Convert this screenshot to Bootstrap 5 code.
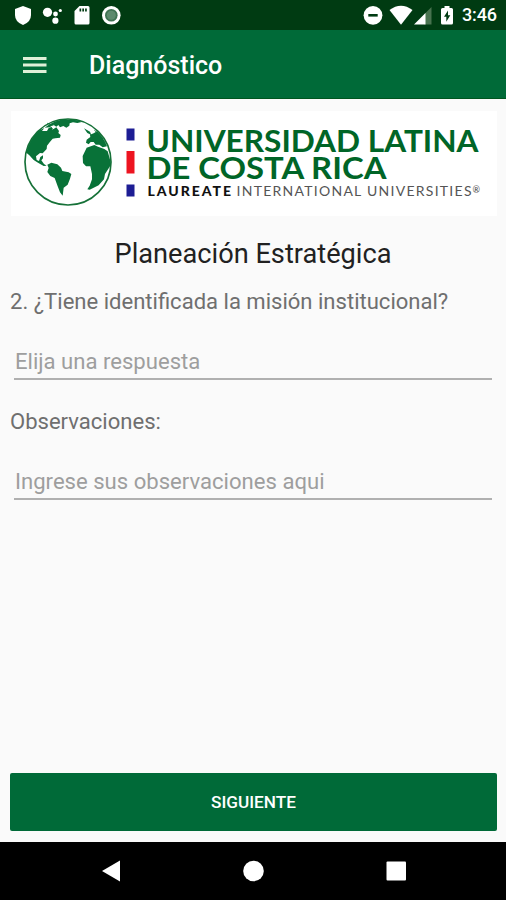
<!DOCTYPE html>
<html lang="es">
<head>
<meta charset="utf-8">
<meta name="viewport" content="width=device-width, initial-scale=1">
<title>Diagnóstico</title>
<link href="https://cdn.jsdelivr.net/npm/bootstrap@5.3.0/dist/css/bootstrap.min.css" rel="stylesheet">
<style>
body{font-family:Roboto,"Liberation Sans",sans-serif;background:#fafafa;height:900px;overflow:hidden}
svg{display:block}
.status-strip{height:30px;background:#003b12;padding:0 9px 0 14px}
.clock{font-size:18px;font-weight:500;line-height:30px;letter-spacing:-.1px;margin-left:8px}
.app-bar{height:69px;background:#006a38;border-bottom:1px solid #00551f;padding:3px 0 0 23px}
.app-title{font-size:25px;font-weight:500;line-height:30px;margin-left:42px}
.brand{margin:12px 9px 0 11px;height:105px;background:#fff}
.section-title{font-size:27.2px;line-height:32px;margin-top:22px;color:#212121;font-weight:400}
.question{font-size:22.05px;line-height:26px;color:#6f6f6f;padding-left:10px}
.section-title + .question{margin-top:19px}
.field + .question{margin-top:29px}
.field,.field:focus{font-size:22.1px;line-height:26px;height:34px;background:transparent;border-bottom:2px solid #b0b0b0;margin:31px 14px 0 14px;padding:0 0 2px 1px;width:auto;color:#333;box-shadow:none}
.field::placeholder{color:#9e9e9e;opacity:1}
.next,.next:hover{height:58px;margin:0 9px 11px 10px;background:#006a38;color:#fff;font-size:17.2px;font-weight:500;border-radius:2px;padding:2px 0 0}
.system-nav{height:58px;background:#000}
</style>
<script src="https://cdn.jsdelivr.net/npm/bootstrap@5.3.0/dist/js/bootstrap.bundle.min.js"></script>
</head>
<body class="d-flex flex-column">
<header class="text-white">
  <div class="status-strip d-flex align-items-center">
    <svg width="108" height="30" viewBox="14 0 108 30" fill="#fff">
      <path d="M23 6l8 3v6q0 7-8 10-8-3-8-10V9z"/>
      <circle cx="47.5" cy="12.3" r="4.6"/><circle cx="55.5" cy="14" r="2.4"/><circle cx="60.3" cy="10.5" r="1.6"/><circle cx="55.4" cy="20.7" r="3.1"/>
      <path fill-rule="evenodd" d="M79.5 6H88q1.5 0 1.500 1.500v15.500q0 1.500-1.500 1.500H76q-1.500 0-1.500-1.500V11zM79.500 8.500v3h1.700v-3zM82.300 8.500v3H84v-3zM85.100 8.500v3h1.700v-3z"/>
      <circle cx="111.300" cy="15.300" r="9.300"/><circle cx="111.300" cy="15.300" r="6.300" fill="#3f7353"/><circle cx="111.300" cy="15.300" r="4.500" fill="#5c8a6d"/>
    </svg>
    <svg class="ms-auto" width="92" height="30" viewBox="363 0 92 30" fill="#fff">
      <circle cx="374" cy="15.300" r="9.400"/><path d="M369.300 14h9.400v2.600h-9.400z" fill="#003b12"/>
      <path d="M390.500 10q11.500-8.500 23 0L402 24.800z"/>
      <path d="M432.500 7v17.500h-7V14z" fill="#48734f"/><path d="M426.500 13v11.500H415z"/>
      <path fill-rule="evenodd" d="M445.500 6h5v2h2q1.500 0 1.500 1.500v13.500q0 1.500-1.500 1.500h-9q-1.500 0-1.500-1.500V9.500q0-1.500 1.500-1.500h2zM449 10.500l-4 6.300h2.300v5l4-6.500H449z"/>
    </svg>
    <span class="clock">3:46</span>
  </div>
  <div class="app-bar d-flex align-items-center">
    <svg width="24" height="20" viewBox="0 0 24 20" fill="#dff0d8"><path d="M0 1h23.500v3H0zM0 7.500h23.500v3H0zM0 14h23.500v3H0z"/></svg>
    <span class="app-title">Diagnóstico</span>
  </div>
</header>
<main class="d-flex flex-column flex-grow-1">
  <div class="brand">
    <svg width="486" height="105" viewBox="11 111 486 105">
      <g transform="translate(10 105) scale(.33333)" fill="#087238">
        <circle cx="174" cy="171" r="129" fill="none" stroke="#167138" stroke-width="5"/>
        <path d="M49 143Q57 106 85 78L103 69 96 78 111 78 116 69 125 66 127 74 139 67 147 78 145 84 152 90 150 98 136 100 128 101 119 112 111 122 110 132 98 145 90 144 78 154 80 165 87 168 91 156 99 151 99 160 94 166 102 177 110 182 101 183 84 173 71 165 58 151z"/>
        <path d="M104 68Q124 52 151 45L164 43 204 46 215 51 202 54 189 52 179 55 178 62 169 68 160 63 150 67 145 60 139 65 130 59 119 67z"/>
        <path d="M112 179L124 173 142 178 153 188 157 198 176 202 184 207 180 221 173 239 161 248 158 272 150 262 143 244 134 219 121 213 112 201 116 189z"/>
        <path d="M222 70L240 80 244 90 232 84zM230 104L241 96 240 89 251 85 261 79Q281 97 291 124L278 127 268 119 257 119 251 111 242 111 236 118 228 113z"/>
        <path d="M230 128L253 120 264 125 283 132 293 139 302 171 300 184 285 207 282 223 266 241 239 254 232 253 239 242 246 223 246 207 241 184 228 184 219 174 218 153z"/>
        <path d="M123 67l9 9M112 55l18 6M254 76l9 9" stroke="#087238" stroke-width="3"/>
      </g>
      <path fill="#1d1d94" d="M126.500 128.500h8v12h-8zM126.500 184.500h8v12h-8z"/>
      <path fill="#ed1420" d="M126.500 151h8v22.500h-8z"/>
      <g fill="#006527" font-family="Lato,sans-serif" font-weight="700" font-size="30.500">
        <text x="146.500" y="151.800" textLength="332" lengthAdjust="spacingAndGlyphs">UNIVERSIDAD LATINA</text>
        <text x="146.500" y="179.300" textLength="240" lengthAdjust="spacingAndGlyphs">DE COSTA RICA</text>
      </g>
      <g font-family="Lato,sans-serif" font-size="14">
        <text x="147.500" y="195.800" textLength="83.500" font-weight="900" fill="#111">LAUREATE</text>
        <text x="236.500" y="195.800" textLength="235" fill="#555">INTERNATIONAL UNIVERSITIES</text>
        <text x="472.500" y="193" font-size="9" fill="#444">®</text>
      </g>
    </svg>
  </div>
  <h1 class="section-title text-center mb-0">Planeación Estratégica</h1>
  <label class="question" for="respuesta">2. ¿Tiene identificada la misión institucional?</label>
  <input id="respuesta" class="field form-control border-top-0 border-start-0 border-end-0 rounded-0" placeholder="Elija una respuesta">
  <label class="question" for="obs">Observaciones:</label>
  <input id="obs" class="field form-control border-top-0 border-start-0 border-end-0 rounded-0" placeholder="Ingrese sus observaciones aqui">
  <button class="next btn border-0 mt-auto" type="button">SIGUIENTE</button>
</main>
<nav class="system-nav" aria-label="Sistema">
  <svg width="506" height="58" viewBox="0 842 506 58" fill="#fff"><path d="M102 871l18-10.500v21z"/><circle cx="253.500" cy="871" r="10.300"/><rect x="386.500" y="861.500" width="19.500" height="19" rx="1"/></svg>
</nav>
</body>
</html>
